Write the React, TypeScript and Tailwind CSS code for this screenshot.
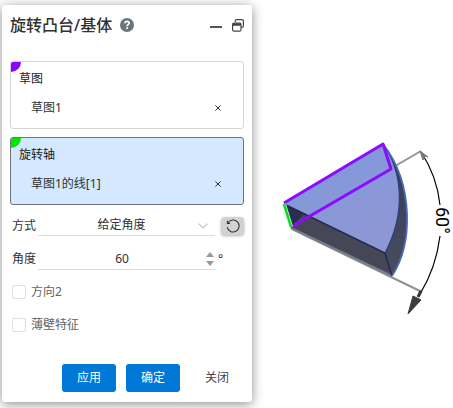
import React, { useState } from 'react';

interface PickBoxProps {
  label: string;
  value: string;
  active?: boolean;
  cornerClass: string;
}

const PickBox: React.FC<PickBoxProps> = ({ label, value, active, cornerClass }) => (
  <section
    className={`relative h-[68px] overflow-hidden rounded-[3px] border px-2 pt-[9px] ${active ? 'border-[#6b7280] bg-[#d4e8ff]' : 'border-[#d8d4d6] bg-white'}`}
  >
    <span className={`absolute left-0 top-0 h-[10px] w-[10px] rounded-br-full ${cornerClass}`} />
    <h2 className="text-xs font-normal leading-4 text-[#1a1a1a]">{label}</h2>
    <div className="mt-[13px] flex items-center justify-between pl-3 pr-[9px] leading-4 text-[#303133]">
      <span>{value}</span>
      <button type="button" aria-label={`移除${value}`} className="flex h-4 w-4 items-center justify-center">
        <svg viewBox="0 0 6 6" className="h-[6px] w-[6px]" stroke="#303133" strokeWidth="1">
          <path d="M.4.4l5.2 5.2M5.6.4L.4 5.6" />
        </svg>
      </button>
    </div>
  </section>
);

const CheckRow: React.FC<{ label: string }> = ({ label }) => {
  const [checked, setChecked] = useState(false);
  return (
    <label className="flex h-[33px] items-center gap-[5px] pl-[2px] text-[#606266]">
      <input
        type="checkbox"
        checked={checked}
        onChange={(e) => setChecked(e.target.checked)}
        className="h-[14px] w-[14px] appearance-none rounded-[2px] border border-[#dcdfe6] bg-white checked:bg-[#0078d7]"
      />
      <span>{label}</span>
    </label>
  );
};

const Viewport: React.FC = () => (
  <svg viewBox="-1 0 201 408" className="h-[408px] w-[201px] shrink-0" fill="none" role="img" aria-label="60°">
    <defs>
      <linearGradient id="top" x1="0.2" y1="0.1" x2="0.55" y2="0.8">
        <stop offset="0" stopColor="#7f99dc" />
        <stop offset="1" stopColor="#8d97d5" />
      </linearGradient>
      <linearGradient id="rim" x1="0" y1="0" x2="0" y2="1">
        <stop offset="0" stopColor="#303a59" />
        <stop offset="1" stopColor="#4b4d5d" />
      </linearGradient>
    </defs>

    {/* Reference rays */}
    <path d="M137 169l31-18M39 229l130 63" stroke="#929292" strokeWidth="2" />

    {/* Solid body */}
    <path d="M130 144C144 162 153 187 154 214C155 241 148 262 139 276L132 253L146 190Z" fill="url(#rim)" />
    <path d="M31 204L132 253L139 276L38 228Z" fill="#454756" />
    <path d="M31 204L51 214L38 228Z" fill="#29304e" />
    <path d="M38 228L139 276" stroke="#777b8b" strokeWidth="2" />
    <path d="M31 204L130 144C151 174 152 215 132 253Z" fill="url(#top)" />
    <path d="M130 144C151 174 152 215 132 253" stroke="#2c3f7c" strokeWidth="1.2" />
    <path d="M31 204L132 253L139 276" stroke="#202b50" strokeWidth="1.5" />
    <path d="M130 144C144 162 153 187 154 214C155 241 148 262 139 276" stroke="#4c69b8" strokeWidth="1.8" />

    {/* Sketch profile and its axis */}
    <path d="M31 203L130 144L138 169L38 227" stroke="#8c0bff" strokeWidth="3" strokeLinejoin="round" />
    <path d="M31 204L38 227" stroke="#f4eeee" strokeWidth="4" />
    <path d="M31 204L38 227" stroke="#00df18" strokeWidth="2.5" />

    {/* Angle dimension */}
    <path d="M168 152Q184 176 187 205M187 236Q183 268 167 294" stroke="#000" strokeWidth="1.2" />
    <path d="M167 151L175 157L172 156L170 160Z" fill="#777" stroke="#777" strokeWidth="1" />
    <path d="M168 291L165 297" stroke="#333" strokeWidth="3" />
    <path d="M160 296L168 300L155 314Z" fill="#3d3d3d" stroke="#3d3d3d" strokeWidth="1" />
    <text
      transform="translate(183 207) rotate(90)"
      fill="#000"
      fontSize="18"
      fontFamily="Roboto, sans-serif"
    >
      60°
    </text>
  </svg>
);

const App: React.FC = () => {
  const [angle, setAngle] = useState('60');
  const step = (n: number) => setAngle(String(Number(angle) + n));

  return (
    <main className="flex items-start overflow-hidden bg-white font-['Noto_Sans','Noto_Sans_CJK_SC',sans-serif] text-xs text-[#303133]">
      <form
        onSubmit={(e) => e.preventDefault()}
        className="mb-[6px] ml-[2px] mt-[5px] min-w-0 flex-1 rounded-[3px] bg-white px-2 pb-[10px] shadow-[0_2px_12px_rgba(0,0,0,0.45)]"
      >
        {/* Title bar */}
        <header className="flex h-10 items-center">
          <h1 className="text-base font-medium leading-6">旋转凸台/基体</h1>
          <button type="button" aria-label="帮助" className="ml-2 flex h-[14px] w-[14px] items-center justify-center rounded-full bg-[#6c757d] text-white">
            <svg viewBox="0 0 14 14" className="h-[14px] w-[14px]" fill="none" stroke="currentColor" strokeWidth="1.7">
              <path d="M4.9 5.2C5 3.9 5.8 3.3 7 3.3c1.3 0 2.2.7 2.2 1.8C9.2 6.6 7.1 6.5 7.1 8.3" />
              <path d="M7.1 9.2v1.8" />
            </svg>
          </button>
          <button type="button" aria-label="最小化" className="ml-auto flex h-4 w-3 items-center">
            <span className="mt-[3px] h-[2px] w-3 bg-[#555]" />
          </button>
          <button type="button" aria-label="还原" className="ml-[10px]">
            <svg viewBox="0 0 12 13" className="h-[13px] w-3" fill="none" stroke="#444" strokeWidth="1.2">
              <path d="M3.2 3V2.2Q3.2.7 4.7.7h5.2q1.5 0 1.5 1.5v4.7q0 1.5-1.5 1.5h-.6" />
              <rect x=".6" y="4" width="8.4" height="8.2" rx="1.5" fill="#fff" />
              <path d="M.6 5.5h8.4" strokeWidth="2.6" />
            </svg>
          </button>
        </header>

        <div className="mt-4 flex flex-col gap-2">
          <PickBox label="草图" value="草图1" cornerClass="bg-[#8c00ff]" />
          <PickBox label="旋转轴" value="草图1的线[1]" active cornerClass="bg-[#00e600]" />
        </div>

        {/* Parameters */}
        <div className="mt-[10px] flex h-[21px] items-center pl-[2px]">
          <label htmlFor="mode" className="w-[26px] shrink-0">方式</label>
          <div className="relative min-w-0 flex-1">
            <select id="mode" className="block h-[21px] w-full appearance-none border-b border-[#dcdcdc] bg-transparent pr-[10px] text-center [text-align-last:center]">
              <option>给定角度</option>
            </select>
            <svg viewBox="0 0 10 6" className="pointer-events-none absolute right-[7px] top-[8px] h-[6px] w-[10px]" fill="none" stroke="#c0c4cc" strokeWidth="1.2">
              <path d="M.7.7L5 5 9.3.7" />
            </svg>
          </div>
          <button type="button" aria-label="反向" className="ml-[6px] flex h-[18px] w-[23px] shrink-0 items-center justify-center rounded-[4px] bg-[#d2d2d2] shadow-[0_1px_3px_rgba(0,0,0,0.3)]">
            <svg viewBox="0 0 14 14" className="h-[14px] w-[14px]" fill="none" stroke="#333" strokeWidth="1.1">
              <path d="M1.2 8.2A6 6 0 1 0 2 3.8" />
              <path d="M1.4 1.8V4.4H4" />
            </svg>
          </button>
        </div>

        <div className="mt-3 flex h-[22px] items-center pl-[2px]">
          <label htmlFor="angle" className="w-[26px] shrink-0">角度</label>
          <div className="flex h-[22px] min-w-0 flex-1 items-center border-b border-[#dcdcdc]">
            <input
              id="angle"
              value={angle}
              onChange={(e) => setAngle(e.target.value)}
              className="min-w-0 flex-1 bg-transparent text-center"
            />
            <span className="flex flex-col gap-[4px] pr-px">
              <button type="button" aria-label="增加" onClick={() => step(1)}>
                <svg viewBox="0 0 8 5" className="h-[5px] w-2" fill="#999"><path d="M0 5L4 0l4 5z" /></svg>
              </button>
              <button type="button" aria-label="减少" onClick={() => step(-1)}>
                <svg viewBox="0 0 8 5" className="h-[5px] w-2" fill="#999"><path d="M0 0l4 5 4-5z" /></svg>
              </button>
            </span>
          </div>
          <span className="w-[29px] shrink-0 pl-[3px]">°</span>
        </div>

        <div className="mt-[5px]">
          <CheckRow label="方向2" />
          <CheckRow label="薄壁特征" />
        </div>

        <footer className="mt-[23px] flex justify-end gap-[10px]">
          <button type="button" className="h-7 w-[54px] rounded-[3px] bg-[#0078d7] text-white">应用</button>
          <button type="submit" className="h-7 w-[54px] rounded-[3px] bg-[#0078d7] text-white">确定</button>
          <button type="button" className="h-7 w-[54px] rounded-[3px] text-[#444]">关闭</button>
        </footer>
      </form>
      <Viewport />
    </main>
  );
};

export default App;
